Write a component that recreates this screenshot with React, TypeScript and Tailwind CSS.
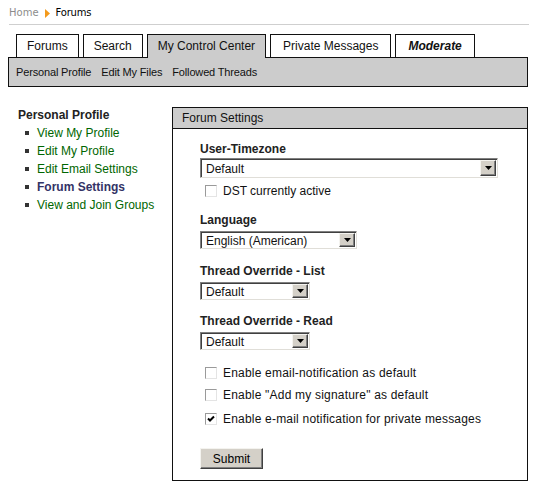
import React from "react";

const tabs = [
  { label: "Forums", pad: "px-[10px]" },
  { label: "Search", pad: "px-[10px]" },
  { label: "My Control Center", active: true, pad: "px-[10px]" },
  { label: "Private Messages", pad: "px-[12px]" },
  { label: "Moderate", em: true, pad: "px-[12px]" },
];

const sideLinks = [
  { label: "View My Profile" },
  { label: "Edit My Profile" },
  { label: "Edit Email Settings" },
  { label: "Forum Settings", current: true },
  { label: "View and Join Groups" },
];

function Select({ value, className }: { value: string; className: string }) {
  return (
    <div
      className={`flex items-center bg-white border border-t-[#808080] border-l-[#808080] border-r-[#e0ded8] border-b-[#e0ded8] shadow-[inset_1px_1px_0_#404040] ${className}`}
    >
      <span className="flex-1 pl-[5px] pt-px text-[12px] leading-none">{value}</span>
      <span className="mr-px flex h-[calc(100%-2px)] w-[16px] items-center justify-center bg-[#d4d0c8] border border-t-[#f4f3ef] border-l-[#f4f3ef] border-r-[#404040] border-b-[#404040] shadow-[inset_-1px_-1px_0_#808080]">
        <svg width="7" height="4" viewBox="0 0 7 4">
          <path d="M0 0h7L3.5 4z" fill="#000" />
        </svg>
      </span>
    </div>
  );
}

function Checkbox({ checked }: { checked?: boolean }) {
  return (
    <span className="flex h-[12px] w-[12px] shrink-0 items-center justify-center bg-white border border-t-[#9a9a9a] border-l-[#9a9a9a] border-r-[#e4e4e4] border-b-[#e4e4e4]">
      {checked && (
        <svg width="8" height="8" viewBox="0 0 8 8">
          <path d="M1 3.5l2 2L7 1.5" stroke="#000" strokeWidth="2" fill="none" />
        </svg>
      )}
    </span>
  );
}

function CheckRow({ label, checked, className }: { label: string; checked?: boolean; className?: string }) {
  return (
    <div className={`flex items-center gap-[6px] pl-[5px] text-[12px] leading-[14px] ${className ?? ""}`}>
      <Checkbox checked={checked} />
      <span>{label}</span>
    </div>
  );
}

export default function App() {
  return (
    <div className="h-[488px] w-[538px] bg-white font-['Liberation_Sans',Arial,sans-serif] text-[#111]">
      {/* breadcrumb */}
      <div className="flex items-center gap-[6px] px-[9px] pt-[6px] font-['DejaVu_Sans',Verdana,sans-serif] text-[10px] leading-[14px]">
        <span className="text-[#8c8c8c]">Home</span>
        <svg width="5" height="9" viewBox="0 0 5 9">
          <path d="M0 0l5 4.5L0 9z" fill="#f39a1c" />
        </svg>
        <span className="text-black tracking-[-0.2px]">Forums</span>
      </div>
      <div className="mx-[9px] mt-[4px] h-px w-[520px] bg-[#cfcfcf]" />

      {/* tabs */}
      <div className="relative z-10 -mb-px mt-[9px] flex gap-[4px] pl-[16px]">
        {tabs.map((t) => (
          <div
            key={t.label}
            className={`flex h-[24px] items-center text-[12px] border border-[#111] ${t.pad} ${
              t.active ? "border-b-0 bg-[#cccccc] pb-px" : "bg-white"
            } ${t.em ? "font-bold italic" : ""}`}
          >
            {t.label}
          </div>
        ))}
      </div>
      <div className="mx-[8px] flex h-[30px] w-[520px] items-center gap-[10px] border border-[#111] bg-[#cccccc] pl-[7px] text-[11px] tracking-[-0.15px]">
        <span>Personal Profile</span>
        <span>Edit My Files</span>
        <span>Followed Threads</span>
      </div>

      {/* main */}
      <div className="mt-[19px] flex pl-[18px]">
        <div className="w-[154px] text-[12px] leading-[18px]">
          <div className="font-bold text-[#222]">Personal Profile</div>
          <ul>
            {sideLinks.map((l) => (
              <li key={l.label} className="flex items-center pl-[7px]">
                <span className="mr-[8px] h-[4px] w-[4px] bg-[#333]" />
                <span className={l.current ? "font-bold text-[#333366]" : "text-[#006600]"}>{l.label}</span>
              </li>
            ))}
          </ul>
        </div>

        <div className="mt-[1px] h-[374px] w-[356px] border border-[#111]">
          <div className="flex h-[21px] items-center border-b border-[#111] bg-[#cccccc] pl-[9px] text-[12px]">
            Forum Settings
          </div>
          <div className="pl-[27px] pt-[13px]">
            <div className="text-[12px] font-bold leading-[14px] text-[#222]">User-Timezone</div>
            <Select value="Default" className="mt-[2px] h-[20px] w-[298px]" />
            <CheckRow label="DST currently active" className="mt-[6px]" />

            <div className="mt-[15px] text-[12px] font-bold leading-[14px] text-[#222]">Language</div>
            <Select value="English (American)" className="mt-[4px] h-[18px] w-[157px]" />

            <div className="mt-[15px] text-[12px] font-bold leading-[14px] text-[#222]">Thread Override - List</div>
            <Select value="Default" className="mt-[4px] h-[18px] w-[110px]" />

            <div className="mt-[14px] text-[12px] font-bold leading-[14px] text-[#222]">Thread Override - Read</div>
            <Select value="Default" className="mt-[4px] h-[18px] w-[110px]" />

            <div className="tracking-[0.2px]">
              <CheckRow label="Enable email-notification as default" className="mt-[16px]" />
              <CheckRow label='Enable "Add my signature" as default' className="mt-[8px]" />
              <CheckRow label="Enable e-mail notification for private messages" checked className="mt-[10px]" />
            </div>

            <button className="mt-[22px] flex h-[21px] w-[63px] items-center justify-center bg-[#d4d0c8] border border-t-[#f4f3ef] border-l-[#f4f3ef] border-r-[#404040] border-b-[#404040] shadow-[inset_-1px_-1px_0_#808080] text-[12px] text-black">
              Submit
            </button>
          </div>
        </div>
      </div>
    </div>
  );
}
